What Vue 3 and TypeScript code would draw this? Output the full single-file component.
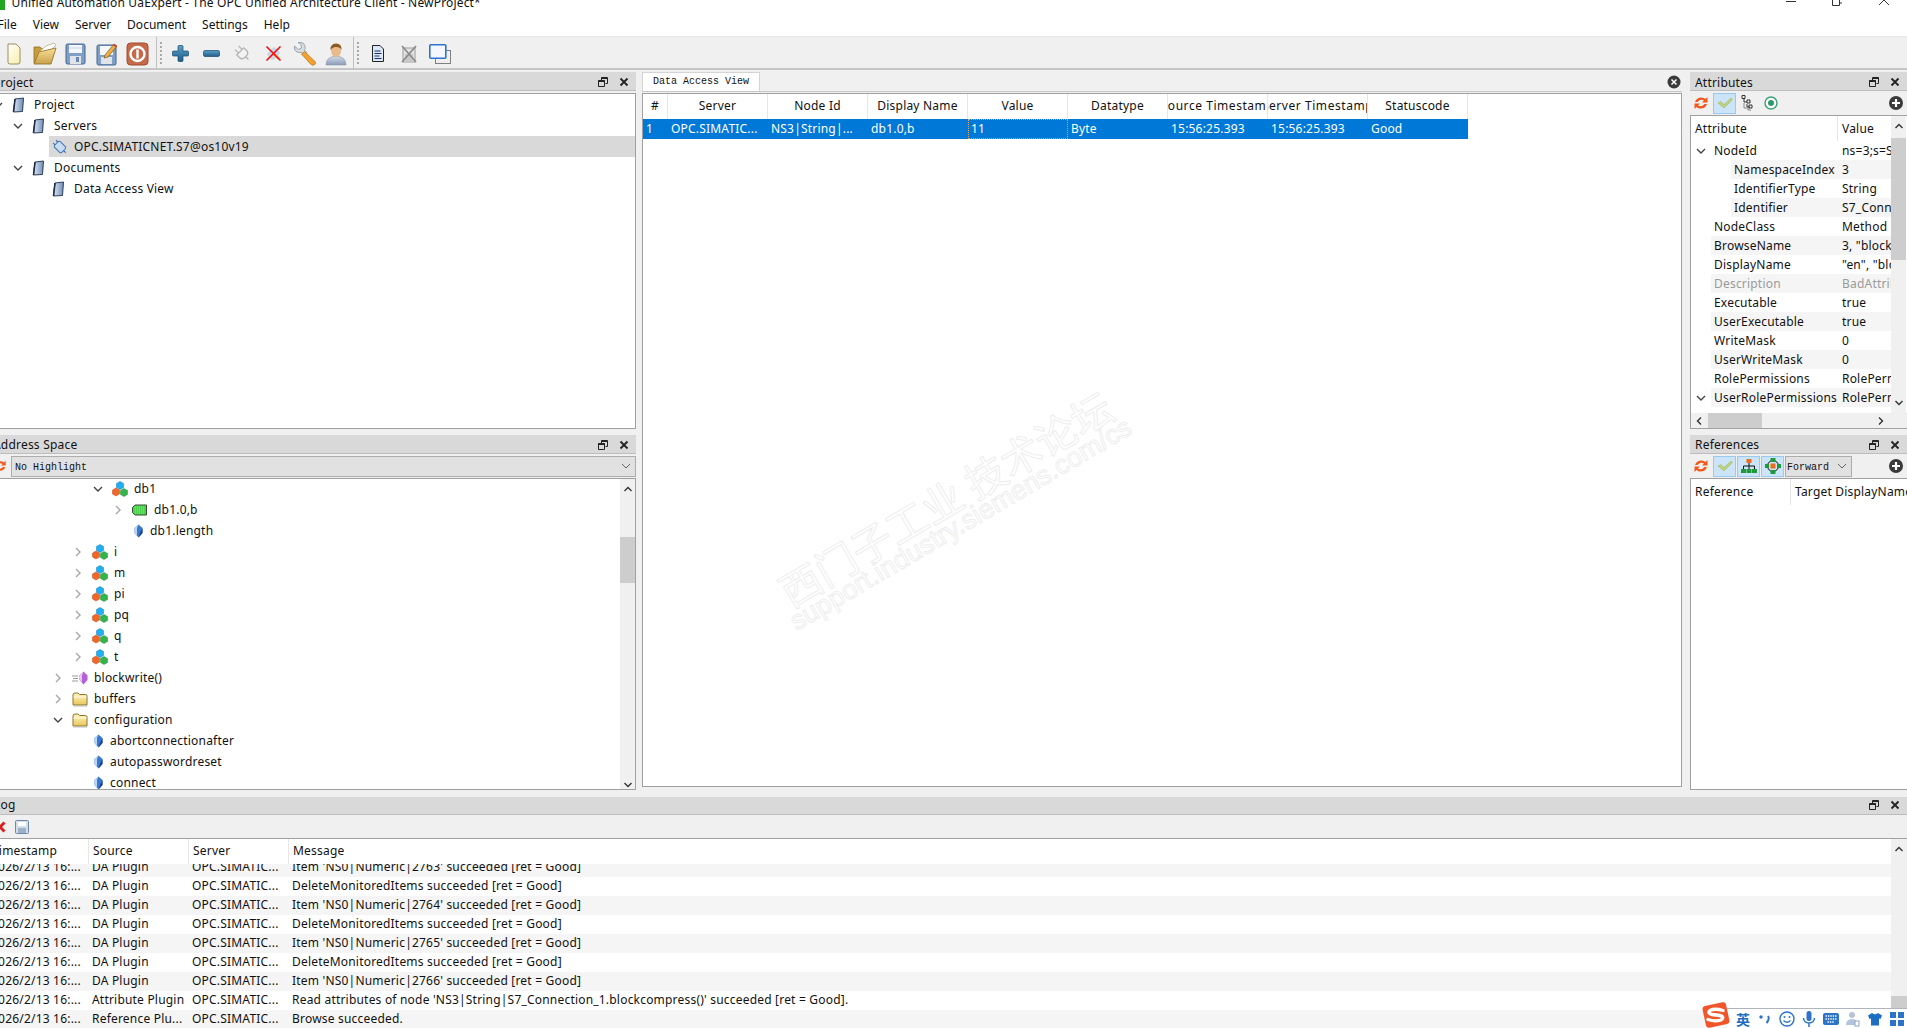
<script setup lang="ts">
interface TreeRow { level: number; chev?: 'down' | 'right'; icon: string; label: string; selected?: boolean }
const BASE_P = -10
const BASE_A = 50
const projectRows: TreeRow[] = [
  { level: 0, chev: 'down', icon: 'i-book', label: 'Project' },
  { level: 1, chev: 'down', icon: 'i-book', label: 'Servers' },
  { level: 2, icon: 'i-server', label: 'OPC.SIMATICNET.S7@os10v19', selected: true },
  { level: 1, chev: 'down', icon: 'i-book', label: 'Documents' },
  { level: 2, icon: 'i-book', label: 'Data Access View' },
]
const addressRows: TreeRow[] = [
  { level: 2, chev: 'down', icon: 'i-obj', label: 'db1' },
  { level: 3, chev: 'right', icon: 'i-tag', label: 'db1.0,b' },
  { level: 3, icon: 'i-var', label: 'db1.length' },
  { level: 1, chev: 'right', icon: 'i-obj', label: 'i' },
  { level: 1, chev: 'right', icon: 'i-obj', label: 'm' },
  { level: 1, chev: 'right', icon: 'i-obj', label: 'pi' },
  { level: 1, chev: 'right', icon: 'i-obj', label: 'pq' },
  { level: 1, chev: 'right', icon: 'i-obj', label: 'q' },
  { level: 1, chev: 'right', icon: 'i-obj', label: 't' },
  { level: 0, chev: 'right', icon: 'i-method', label: 'blockwrite()' },
  { level: 0, chev: 'right', icon: 'i-folder', label: 'buffers' },
  { level: 0, chev: 'down', icon: 'i-folder', label: 'configuration' },
  { level: 1, icon: 'i-var', label: 'abortconnectionafter' },
  { level: 1, icon: 'i-var', label: 'autopasswordreset' },
  { level: 1, icon: 'i-var', label: 'connect' },
]
const menus = ['File', 'View', 'Server', 'Document', 'Settings', 'Help']
const tb1 = [
  { id: 't-new', w: 14, h: 24 }, { id: 't-open', w: 24, h: 24 }, { id: 't-save', w: 21, h: 24 },
  { id: 't-saveas', w: 21, h: 24 }, { id: 't-power', w: 23, h: 24 },
]
const tb2 = [
  { id: 't-plus', w: 17, h: 17 }, { id: 't-minus', w: 17, h: 17 }, { id: 't-plug', w: 17, h: 17 },
  { id: 't-x', w: 17, h: 17 }, { id: 't-wrench', w: 24, h: 24 }, { id: 't-user', w: 22, h: 24 },
]
const tb3 = [{ id: 't-page', w: 12, h: 17 }, { id: 't-grayx', w: 16, h: 18 }, { id: 't-wins', w: 22, h: 20 }]
const daCols = ['#', 'Server', 'Node Id', 'Display Name', 'Value', 'Datatype', 'Source Timestamp', 'Server Timestamp', 'Statuscode']
const daRow = ['1', 'OPC.SIMATIC...', 'NS3|String|...', 'db1.0,b', '11', 'Byte', '15:56:25.393', '15:56:25.393', 'Good']
const attrs = [
  { k: 'NodeId', v: 'ns=3;s=S7', lvl: 0, chev: true },
  { k: 'NamespaceIndex', v: '3', lvl: 1 },
  { k: 'IdentifierType', v: 'String', lvl: 1 },
  { k: 'Identifier', v: 'S7_Connection', lvl: 1 },
  { k: 'NodeClass', v: 'Method', lvl: 0 },
  { k: 'BrowseName', v: '3, "blockcompress"', lvl: 0 },
  { k: 'DisplayName', v: '"en", "blockcompress"', lvl: 0 },
  { k: 'Description', v: 'BadAttributeIdInvalid', lvl: 0, muted: true },
  { k: 'Executable', v: 'true', lvl: 0 },
  { k: 'UserExecutable', v: 'true', lvl: 0 },
  { k: 'WriteMask', v: '0', lvl: 0 },
  { k: 'UserWriteMask', v: '0', lvl: 0 },
  { k: 'RolePermissions', v: 'RolePermissions', lvl: 0 },
  { k: 'UserRolePermissions', v: 'RolePermissions', lvl: 0, chev: true },
]
const good = 'succeeded [ret = Good]'
const logRows = [
  ['2026/2/13 16:...', 'DA Plugin', "Item 'NS0|Numeric|2763' " + good],
  ['2026/2/13 16:...', 'DA Plugin', 'DeleteMonitoredItems ' + good],
  ['2026/2/13 16:...', 'DA Plugin', "Item 'NS0|Numeric|2764' " + good],
  ['2026/2/13 16:...', 'DA Plugin', 'DeleteMonitoredItems ' + good],
  ['2026/2/13 16:...', 'DA Plugin', "Item 'NS0|Numeric|2765' " + good],
  ['2026/2/13 16:...', 'DA Plugin', 'DeleteMonitoredItems ' + good],
  ['2026/2/13 16:...', 'DA Plugin', "Item 'NS0|Numeric|2766' " + good],
  ['2026/2/13 16:...', 'Attribute Plugin', "Read attributes of node 'NS3|String|S7_Connection_1.blockcompress()' " + good + '.'],
  ['2026/2/13 16:...', 'Reference Plu...', 'Browse succeeded.'],
]
function indent(r: TreeRow, base: number) { return { marginLeft: base + r.level * 20 + 'px' } }
</script>

<template>
  <svg class="defs" width="0" height="0" aria-hidden="true">
    <defs>
      <linearGradient id="gBook" x1="0" y1="0" x2="1" y2="0"><stop offset="0" stop-color="#dfe7f2"/><stop offset="1" stop-color="#6f8db8"/></linearGradient>
      <linearGradient id="gFolder" x1="0" y1="0" x2="0" y2="1"><stop offset="0" stop-color="#fff6c4"/><stop offset="1" stop-color="#e9c75a"/></linearGradient>
      <linearGradient id="gPlus" x1="0" y1="0" x2="0" y2="1"><stop offset="0" stop-color="#5d9fc6"/><stop offset="1" stop-color="#1d5f8a"/></linearGradient>
      <linearGradient id="gUser" x1="0" y1="0" x2="0" y2="1"><stop offset="0" stop-color="#cfd8e6"/><stop offset="1" stop-color="#8c9cb8"/></linearGradient>
      <linearGradient id="gNew" x1="0" y1="0" x2="1" y2="1"><stop offset="0" stop-color="#ffffff"/><stop offset="1" stop-color="#fbeea8"/></linearGradient>
      <linearGradient id="gOpen" x1="0" y1="0" x2="0" y2="1"><stop offset="0" stop-color="#f8e09a"/><stop offset="1" stop-color="#c9a24a"/></linearGradient>
      <symbol id="i-book" viewBox="0 0 16 16"><path d="M3 2 L11.5 1 L10.5 14.5 L1.5 15 Z" fill="url(#gBook)" stroke="#2d3f5c" stroke-width="1"/><path d="M3 2 L1.5 15" stroke="#1f2c44" stroke-width="1.6" fill="none"/></symbol>
      <symbol id="i-server" viewBox="0 0 16 16"><g transform="rotate(-45 8 8)"><rect x="4" y="3" width="8" height="10" rx="1.5" fill="#c9dcf2" stroke="#3d74b5"/><path d="M6 0.5v2.5M10 0.5v2.5M8 13v3" stroke="#3d74b5" stroke-width="1.3"/></g></symbol>
      <symbol id="i-obj" viewBox="0 0 16 16"><path d="M8 0.5 L11.5 2.5 V6.5 L8 8.5 L4.5 6.5 V2.5 Z" fill="#1fb0f0" stroke="#1478c0" stroke-width=".5"/><path d="M4 7 L7.5 9 V13 L4 15 L0.5 13 V9 Z" fill="#f0672a" stroke="#c04a14" stroke-width=".5"/><path d="M12 7.5 L15.5 9.5 V13.5 L12 15.5 L8.5 13.5 V9.5 Z" fill="#33b54a" stroke="#1d8a33" stroke-width=".5"/></symbol>
      <symbol id="i-var" viewBox="0 0 9 14"><path d="M4.5 0.5 L8.5 4 L8.5 9 L4.5 13.5 L0.5 9 L0.5 4 Z" fill="#3a78d0"/><path d="M4.5 .5 L.5 4 V9 L3 11.5 V4 Z" fill="#bcd6f5"/><path d="M4.5 13.5 L8.5 9 V4 L6 9Z" fill="#1c3f8a"/></symbol>
      <symbol id="i-method" viewBox="0 0 16 14"><path d="M0 5h6M1 7.5h5M0 10h6" stroke="#9a9a9a" stroke-width="1" fill="none"/><path d="M11.5 0.5 L15.5 4.5 V9 L11.5 13.5 L7.5 9 V4.5 Z" fill="#b461d8"/><path d="M11.5 .5 L7.5 4.5 V9 L10 11 V4.5 Z" fill="#ecc4f8"/></symbol>
      <symbol id="i-folder" viewBox="0 0 16 16"><path d="M1 4 Q1 2 3 2 H6 L7.5 3.5 H13.5 Q15 3.5 15 5 V14 H1 Z" fill="url(#gFolder)" stroke="#8c7430"/><path d="M1.5 6 H14.5" stroke="#fffbe0" stroke-width="1"/><path d="M2 15 H15.5" stroke="#bbb" stroke-width="1"/></symbol>
      <symbol id="i-tag" viewBox="0 0 16 12"><path d="M3 1 H14.5 V11 H3 L0.5 8.5 V3.5 Z" fill="#4ed24e" stroke="#3c4a3c"/><path d="M3 3h10M3 5h10M3 7h10M3 9h10" stroke="#a8f0a8" stroke-width=".7" stroke-dasharray="1 1"/></symbol>
      <symbol id="s-float" viewBox="0 0 10 10"><path d="M3.5 .5h6v6h-2M.5 3.5h6v6h-6z M3.5 .5v3M.5 3.5h6" fill="none" stroke="#222" stroke-width="1"/><path d="M3.5 1.5h6M.5 4.5h6" stroke="#222"/></symbol>
      <symbol id="s-close" viewBox="0 0 10 10"><path d="M1.5 1.5l7 7M8.5 1.5l-7 7" stroke="#222" stroke-width="1.8"/></symbol>
      <symbol id="t-new" viewBox="0 0 14 24"><path d="M1 2 H9 L13 6 V20 Q13 22 11 22 H3 Q1 22 1 20 Z" fill="url(#gNew)" stroke="#9a8f60"/></symbol>
      <symbol id="t-open" viewBox="0 0 24 24"><path d="M1 5 H7 L9 7 H17 V21 H1 Z" fill="#c99c3c" stroke="#8f6d22" stroke-width=".8"/><path d="M5 11 L13 4 L21 1 L23 3 L16 10 Z" fill="#fff" stroke="#b9a36a" stroke-width=".7"/><path d="M1 22 L6 10 L23 6 L18 22 Z" fill="url(#gOpen)" stroke="#98762a" stroke-width=".9"/></symbol>
      <symbol id="t-save" viewBox="0 0 21 24"><rect x="1" y="2" width="19" height="20" rx="1.5" fill="#7f9fc6" stroke="#45658f"/><rect x="4" y="3" width="13" height="8" fill="#f3f6fb"/><path d="M4 6h13" stroke="#c8d4e4"/><rect x="5" y="14" width="11" height="8" fill="#dfe4ea"/><rect x="11" y="15" width="3" height="5" fill="#6a86ac"/></symbol>
      <symbol id="t-saveas" viewBox="0 0 21 24"><rect x="1" y="3" width="19" height="20" rx="1.5" fill="#7f9fc6" stroke="#45658f"/><rect x="4" y="4" width="13" height="9" fill="#f3f6fb"/><rect x="5" y="15" width="11" height="7" fill="#dfe4ea"/><path d="M9 13 L18 2 L21 4 L12 15 L8 16 Z" fill="#eeb040" stroke="#7a5416" stroke-width=".7"/><path d="M18 2 L21 4 L20 5.5 L17 3.4 Z" fill="#d24a3a"/></symbol>
      <symbol id="t-power" viewBox="0 0 23 24"><rect x="1" y="1" width="21" height="22" rx="3.5" fill="#c56a4b" stroke="#a24a2e"/><circle cx="11.5" cy="12" r="7" fill="none" stroke="#fff" stroke-width="2.4"/><path d="M11.5 7.5v9" stroke="#fff" stroke-width="2.4"/></symbol>
      <symbol id="t-plus" viewBox="0 0 17 17"><path d="M6 1.5 Q6 .5 7 .5 H10 Q11 .5 11 1.5 V6 H15.5 Q16.5 6 16.5 7 V10 Q16.5 11 15.5 11 H11 V15.5 Q11 16.5 10 16.5 H7 Q6 16.5 6 15.5 V11 H1.5 Q.5 11 .5 10 V7 Q.5 6 1.5 6 H6 Z" fill="url(#gPlus)" stroke="#174a70" stroke-width=".7"/></symbol>
      <symbol id="t-minus" viewBox="0 0 17 17"><rect x=".5" y="5.5" width="16" height="6" rx="1.5" fill="url(#gPlus)" stroke="#174a70" stroke-width=".7"/></symbol>
      <symbol id="t-plug" viewBox="0 0 17 17"><g transform="rotate(-45 8.5 8.5)" fill="#f2f2f2" stroke="#b4b4b4" stroke-width="1.3"><path d="M3.5 5.5 H13.5 V9.5 Q13.5 13 8.5 13 Q3.5 13 3.5 9.5 Z"/><path d="M6 5.5 V0.5 M11 5.5 V0.5 M8.5 13 V17" fill="none"/></g></symbol>
      <symbol id="t-x" viewBox="0 0 17 17"><rect x="4" y="3" width="9" height="11" rx="2" fill="#ccd4ea" transform="rotate(45 8.5 8.5)"/><path d="M9 9l5 5" stroke="#f0b040" stroke-width="2.5"/><path d="M1.5 1.5l14 14M15.5 1.5l-14 14" stroke="#ee1010" stroke-width="1.6"/></symbol>
      <symbol id="t-wrench" viewBox="0 0 24 24"><path d="M1.5 4 L5.5 7.5 L8.5 6 L8 2.5 L5 0.5 Q11 -0.5 12 4.5 Q12.5 6.5 11.5 8 L14 10.5 L11 13 L8 10.5 Q3 11 1.5 7 Z" fill="#d6dce2" stroke="#8b96a0" stroke-width=".8"/><path d="M11.5 9.5 L22 19.5 Q23.5 21.5 21 23 Q19 23.8 17.5 22 L8.5 12 Z" fill="#f2a02e" stroke="#b8731a" stroke-width=".7"/></symbol>
      <symbol id="t-user" viewBox="0 0 22 24"><path d="M1 23 Q1 16 8 14.5 H14 Q21 16 21 23 Z" fill="url(#gUser)" stroke="#8a96ac" stroke-width=".6"/><ellipse cx="11" cy="9" rx="5" ry="6" fill="#eab98c"/><path d="M5.5 8 Q5 2 11 1.5 Q17 1.5 16.5 8 Q15 4.5 10 5 Q7 5.5 5.5 8 Z" fill="#8a5a22"/></symbol>
      <symbol id="t-page" viewBox="0 0 12 17"><path d="M.5 .5 H8 L11.5 4 V16.5 H.5 Z" fill="#dbe6f7" stroke="#222"/><path d="M2.5 6h6M2.5 8.5h7M2.5 11h5M2.5 13.5h7" stroke="#1b2f6a" stroke-width="1.2"/></symbol>
      <symbol id="t-grayx" viewBox="0 0 16 18"><rect x="2" y="3" width="12" height="14" fill="#e4e4e4" stroke="#9a9a9a"/><rect x="4" y="9" width="8" height="8" fill="#c8c8c8"/><path d="M1 1 L15 17 M15 1 L1 17" stroke="#8c8c8c" stroke-width="1.8"/></symbol>
      <symbol id="t-wins" viewBox="0 0 22 20"><rect x="6.5" y="6.5" width="15" height="13" fill="#efefef" stroke="#7f7f7f"/><rect x=".8" y=".8" width="16" height="13.5" rx="1" fill="#f4f8fe" stroke="#2f72d0" stroke-width="1.6"/></symbol>
      <symbol id="t-refresh" viewBox="0 0 16 14"><path d="M2 6 Q3.5 1.5 8.5 1.5 Q11 1.5 12.5 3 L14.5 1 V6.5 H9 L11 4.6 Q7.5 2.5 4.5 6 Z M14 8 Q12.5 12.5 7.5 12.5 Q5 12.5 3.5 11 L1.5 13 V7.5 H7 L5 9.4 Q8.5 11.5 11.5 8 Z" fill="#f0581c"/></symbol>
      <symbol id="t-check" viewBox="0 0 16 14"><path d="M1 7 L4 5.5 L7 8.5 L14 2 L15.5 3.5 L7 12 Z" fill="#bdd27e" stroke="#9db35c" stroke-width=".5"/></symbol>
      <symbol id="t-browse" viewBox="0 0 12 16"><path d="M1 .5h3v3H1zM3 4v3h3M6 5h3v3H6zM6 9v3h3M8 10h3v3H8z" fill="none" stroke="#333" stroke-width="1"/><path d="M3 8v5h4v2h3" fill="none" stroke="#888"/></symbol>
      <symbol id="t-target" viewBox="0 0 14 14"><circle cx="7" cy="7" r="6" fill="#fff" stroke="#3ca078" stroke-width="1.4"/><circle cx="7" cy="7" r="3" fill="#2f9a68"/></symbol>
      <symbol id="t-add" viewBox="0 0 14 14"><circle cx="7" cy="7" r="7" fill="#3a3a3a"/><path d="M7 3v8M3 7h8" stroke="#fff" stroke-width="2.2"/></symbol>
      <symbol id="t-hier" viewBox="0 0 16 14"><rect x="5.5" y="0" width="5" height="4" fill="#f06a1e"/><path d="M8 4v3M2.5 10V7h11v3M8 7v3" stroke="#111" fill="none"/><rect x="0" y="10" width="5" height="4" fill="#1e9a3a"/><rect x="5.5" y="10" width="5" height="4" fill="#1e9a3a"/><rect x="11" y="10" width="5" height="4" fill="#1e9a3a"/></symbol>
      <symbol id="t-net" viewBox="0 0 16 16"><circle cx="8" cy="8" r="5.5" fill="none" stroke="#111"/><rect x="5.5" y="0" width="5" height="4" fill="#1e9a3a"/><rect x="5.5" y="12" width="5" height="4" fill="#1e9a3a"/><rect x="0" y="6" width="4" height="4" fill="#1e9a3a"/><rect x="12" y="6" width="4" height="4" fill="#1e9a3a"/><rect x="5.5" y="5.5" width="5" height="5" fill="#f06a1e"/></symbol>
    </defs>
  </svg>

  <div class="window">
    <header class="titlebar">
      <span class="app-logo"></span>
      <span class="app-title">Unified Automation UaExpert - The OPC Unified Architecture Client - NewProject*</span>
      <div class="win-ctl">
        <svg width="10" height="10" viewBox="0 0 10 10"><path d="M0 1.5h10" stroke="#333"/></svg>
        <svg width="10" height="10" viewBox="0 0 10 10"><path d="M2.5 -1.5V-5h8v8H7.5M.5 -1.5h7v7h-7z" fill="none" stroke="#333"/></svg>
        <svg width="12" height="10" viewBox="0 0 12 10"><path d="M1-5l10 10M11-5L1 5" stroke="#333" fill="none"/></svg>
      </div>
    </header>

    <nav class="menubar"><span v-for="m in menus" :key="m" class="menu">{{ m }}</span></nav>

    <div class="toolbar">
      <div class="tb-group first"><span v-for="b in tb1" :key="b.id" class="tb-btn"><svg :width="b.w" :height="b.h"><use :href="'#' + b.id"/></svg></span></div>
      <span class="tb-sep"></span><span class="tb-grip"></span>
      <div class="tb-group"><span v-for="b in tb2" :key="b.id" class="tb-btn"><svg :width="b.w" :height="b.h"><use :href="'#' + b.id"/></svg></span></div>
      <span class="tb-sep"></span><span class="tb-grip"></span>
      <div class="tb-group"><span v-for="b in tb3" :key="b.id" class="tb-btn"><svg :width="b.w" :height="b.h"><use :href="'#' + b.id"/></svg></span></div>
    </div>

    <div class="workspace">
      <div class="col col-left">
        <section class="dock dock-project">
          <div class="dock-title t-high"><span class="clip-title c-project">Project</span><span class="dock-btns"><svg width="10" height="10"><use href="#s-float"/></svg><svg width="10" height="10"><use href="#s-close"/></svg></span></div>
          <div class="panel tree">
            <div v-for="r in projectRows" :key="r.label" class="tree-row" :class="{ sel: r.selected }">
              <span class="row-in" :style="indent(r, BASE_P)">
                <span class="chev"><svg v-if="r.chev" width="10" height="10" viewBox="0 0 10 10"><path d="M1 3l4 4 4-4" fill="none" stroke="#444" stroke-width="1.4"/></svg></span>
                <svg class="ico" :width="16" :height="16"><use :href="'#' + r.icon"/></svg>
                <span>{{ r.label }}</span>
              </span>
            </div>
          </div>
        </section>

        <section class="dock dock-address">
          <div class="dock-title t-low"><span class="clip-title c-address">Address Space</span><span class="dock-btns"><svg width="10" height="10"><use href="#s-float"/></svg><svg width="10" height="10"><use href="#s-close"/></svg></span></div>
          <div class="hl-row">
            <svg class="hl-ico" width="14" height="14"><use href="#t-refresh"/></svg>
            <div class="combo hl-combo"><span class="mono">No Highlight</span><svg width="10" height="10" viewBox="0 0 10 10"><path d="M1 3l4 4 4-4" fill="none" stroke="#666"/></svg></div>
          </div>
          <div class="panel tree addr">
            <div class="addr-rows">
              <div v-for="r in addressRows" :key="r.label" class="tree-row">
                <span class="row-in" :style="indent(r, BASE_A)">
                  <span class="chev">
                    <svg v-if="r.chev === 'down'" width="10" height="10" viewBox="0 0 10 10"><path d="M1 3l4 4 4-4" fill="none" stroke="#444" stroke-width="1.4"/></svg>
                    <svg v-else-if="r.chev === 'right'" width="10" height="10" viewBox="0 0 10 10"><path d="M3 1l4 4-4 4" fill="none" stroke="#a6a6a6" stroke-width="1.4"/></svg>
                  </span>
                  <svg v-if="r.icon === 'i-var'" class="ico-var" width="9" height="14"><use href="#i-var"/></svg>
                  <svg v-else class="ico" width="16" height="16"><use :href="'#' + r.icon"/></svg>
                  <span>{{ r.label }}</span>
                </span>
              </div>
            </div>
            <div class="vscroll">
              <svg width="10" height="8" viewBox="0 0 10 8"><path d="M1.5 6l3.5-3.5L8.5 6" fill="none" stroke="#333" stroke-width="1.4"/></svg>
              <div class="track addr-track"><div class="thumb addr-thumb"></div></div>
              <svg width="10" height="8" viewBox="0 0 10 8"><path d="M1.5 2l3.5 3.5L8.5 2" fill="none" stroke="#333" stroke-width="1.4"/></svg>
            </div>
          </div>
        </section>
      </div>

      <div class="col col-center">
        <div class="tabbar">
          <span class="tab mono">Data Access View</span>
          <svg class="tab-close" width="14" height="14" viewBox="0 0 14 14"><circle cx="7" cy="7" r="6.5" fill="#3a3a3a"/><path d="M4.5 4.5l5 5M9.5 4.5l-5 5" stroke="#fff" stroke-width="1.5"/></svg>
        </div>
        <div class="panel da">
          <div class="da-head">
            <span v-for="c in daCols" :key="c" class="da-h"><span>{{ c }}</span></span>
          </div>
          <div class="da-row">
            <span v-for="(c, i) in daRow" :key="i" class="da-c" :class="{ focus: i === 4 }">{{ c }}</span>
          </div>
          <div class="watermark" aria-hidden="true">
            <span class="wm-cn">西门子工业 技术论坛</span>
            <span class="wm-en">support.industry.siemens.com/cs</span>
          </div>
        </div>
      </div>

      <div class="col col-right">
        <section class="dock dock-attr">
          <div class="dock-title t-high"><span class="r-title">Attributes</span><span class="dock-btns"><svg width="10" height="10"><use href="#s-float"/></svg><svg width="10" height="10"><use href="#s-close"/></svg></span></div>
          <div class="side-tools">
            <svg class="r-ico" width="16" height="14"><use href="#t-refresh"/></svg>
            <span class="toggle"><svg width="16" height="14"><use href="#t-check"/></svg></span>
            <svg class="browse-ico" width="12" height="16"><use href="#t-browse"/></svg>
            <svg class="target-ico" width="14" height="14"><use href="#t-target"/></svg>
            <svg class="add-ico" width="14" height="14"><use href="#t-add"/></svg>
          </div>
          <div class="panel attr">
            <div class="attr-main">
              <div class="attr-body">
                <div class="attr-head"><span class="ah-k">Attribute</span><span class="ah-v">Value</span></div>
                <div v-for="(a, i) in attrs" :key="a.k" class="attr-row" :class="{ muted: a.muted }">
                  <span class="attr-chev"><svg v-if="a.chev" width="10" height="10" viewBox="0 0 10 10"><path d="M1 3l4 4 4-4" fill="none" stroke="#444" stroke-width="1.4"/></svg></span>
                  <span class="attr-band" :class="{ alt: i % 2 === 1, child: a.lvl === 1 }">
                    <span class="attr-k">{{ a.k }}</span><span class="attr-v">{{ a.v }}</span>
                  </span>
                </div>
              </div>
              <div class="vscroll v-attr">
                <svg width="10" height="8" viewBox="0 0 10 8"><path d="M1.5 6l3.5-3.5L8.5 6" fill="none" stroke="#333" stroke-width="1.4"/></svg>
                <div class="track attr-track"><div class="thumb attr-thumb"></div></div>
                <svg width="10" height="8" viewBox="0 0 10 8"><path d="M1.5 2l3.5 3.5L8.5 2" fill="none" stroke="#333" stroke-width="1.4"/></svg>
              </div>
            </div>
            <div class="hscroll">
              <svg width="8" height="10" viewBox="0 0 8 10"><path d="M6 1.5L2.5 5 6 8.5" fill="none" stroke="#333" stroke-width="1.4"/></svg>
              <div class="htrack"><div class="hthumb"></div></div>
              <svg width="8" height="10" viewBox="0 0 8 10"><path d="M2 1.5L5.5 5 2 8.5" fill="none" stroke="#333" stroke-width="1.4"/></svg>
            </div>
          </div>
        </section>
        <section class="dock dock-ref">
          <div class="dock-title t-low"><span class="r-title">References</span><span class="dock-btns"><svg width="10" height="10"><use href="#s-float"/></svg><svg width="10" height="10"><use href="#s-close"/></svg></span></div>
          <div class="side-tools ref-tools">
            <svg class="r-ico" width="16" height="14"><use href="#t-refresh"/></svg>
            <span class="toggle"><svg width="16" height="14"><use href="#t-check"/></svg></span>
            <span class="toggle t2"><svg width="16" height="14"><use href="#t-hier"/></svg></span>
            <span class="toggle t2"><svg width="16" height="16"><use href="#t-net"/></svg></span>
            <div class="combo fw-combo"><span class="mono">Forward</span><svg width="10" height="10" viewBox="0 0 10 10"><path d="M1 3l4 4 4-4" fill="none" stroke="#666"/></svg></div>
            <svg class="add-ico" width="14" height="14"><use href="#t-add"/></svg>
          </div>
          <div class="panel ref">
            <div class="ref-head"><span class="rh-k">Reference</span><span class="rh-v">Target DisplayName</span></div>
          </div>
        </section>
      </div>
    </div>

    <section class="log">
      <div class="dock-title log-title"><span class="clip-title c-log">Log</span><span class="dock-btns"><svg width="10" height="10"><use href="#s-float"/></svg><svg width="10" height="10"><use href="#s-close"/></svg></span></div>
      <div class="log-tools">
        <svg class="log-x" width="12" height="12" viewBox="0 0 12 12"><path d="M1.5 1.5l9 9M10.5 1.5l-9 9" stroke="#d8201c" stroke-width="3"/></svg>
        <svg class="log-save" width="14" height="14" viewBox="0 0 14 14"><rect x=".5" y=".5" width="13" height="13" rx="1" fill="#d4deeb" stroke="#6f88a8"/><rect x="3" y="2" width="8" height="4" fill="#fff"/><rect x="3" y="8" width="8" height="5" fill="#9eb0c8"/></svg>
      </div>
      <div class="log-main">
        <div class="log-table">
          <div class="log-head"><span class="l1">Timestamp</span><span class="l2">Source</span><span class="l3">Server</span><span class="l4">Message</span></div>
          <div class="log-rows">
            <div v-for="(r, i) in logRows" :key="i" class="log-row" :class="{ alt: i % 2 === 0 }">
              <span class="l1">{{ r[0] }}</span><span class="l2">{{ r[1] }}</span><span class="l3">OPC.SIMATIC...</span><span class="l4">{{ r[2] }}</span>
            </div>
          </div>
        </div>
        <div class="vscroll v-log">
          <svg width="10" height="8" viewBox="0 0 10 8"><path d="M1.5 6l3.5-3.5L8.5 6" fill="none" stroke="#333" stroke-width="1.4"/></svg>
          <div class="track log-track"><div class="thumb log-thumb"></div></div>
        </div>
      </div>
    </section>

    <div class="ime">
      <svg class="ime-logo" width="30" height="26" viewBox="0 0 30 26"><rect x="3" y="2" width="24" height="22" rx="3" transform="rotate(-12 15 13)" fill="#f0562a"/><path d="M22 8.5 Q14 6 9 8.5 Q6 11 11 12.5 L19 13.5 Q24 15 20 18 Q14 20 7 17.5" fill="none" stroke="#fff" stroke-width="3.4" stroke-linecap="round"/></svg>
      <div class="ime-bar">
        <span class="ime-cell ime-cn">英</span>
        <span class="ime-cell"><svg width="14" height="14" viewBox="0 0 14 14"><circle cx="3" cy="5" r="1.7" fill="#2b74c8"/><path d="M10 4 Q12 7 8.5 11" fill="none" stroke="#2b74c8" stroke-width="2"/></svg></span>
        <span class="ime-cell"><svg width="16" height="16" viewBox="0 0 16 16"><circle cx="8" cy="8" r="7" fill="none" stroke="#2b74c8" stroke-width="1.4"/><circle cx="5.5" cy="6" r="1" fill="#2b74c8"/><circle cx="10.5" cy="6" r="1" fill="#2b74c8"/><path d="M4.5 9.5 Q8 13 11.5 9.5" fill="none" stroke="#2b74c8" stroke-width="1.2"/></svg></span>
        <span class="ime-cell"><svg width="14" height="16" viewBox="0 0 14 16"><rect x="4.5" y="0" width="5" height="10" rx="2.5" fill="#2b74c8"/><path d="M1.5 7 Q2 12 7 12 Q12 12 12.5 7M7 12v4" fill="none" stroke="#2b74c8" stroke-width="1.5"/></svg></span>
        <span class="ime-cell"><svg width="16" height="12" viewBox="0 0 16 12"><rect width="16" height="12" rx="2" fill="#2b74c8"/><path d="M2.5 3h11M2.5 6h11M4.5 9h7" stroke="#fff" stroke-width="1.4" stroke-dasharray="1.4 1"/></svg></span>
        <span class="ime-cell"><svg width="14" height="16" viewBox="0 0 14 16"><circle cx="6" cy="4" r="3" fill="#b4c4dc"/><path d="M0 14 Q0 8 6 8 Q10 8 11 11 V14Z" fill="#b4c4dc"/><rect x="9" y="10" width="4" height="5" fill="#fff" stroke="#8ea4c4"/></svg></span>
        <span class="ime-cell"><svg width="14" height="14" viewBox="0 0 14 14"><path d="M4 1 L0 3.5 L1.5 7 L3 6.5 V13.5 H11 V6.5 L12.5 7 L14 3.5 L10 1 Q7 3.5 4 1Z" fill="#1b6ec2"/></svg></span>
        <span class="ime-cell"><svg width="14" height="14" viewBox="0 0 14 14"><rect width="6" height="6" fill="#2b74c8"/><rect x="8" width="6" height="6" fill="#2b74c8"/><rect y="8" width="6" height="6" fill="#2b74c8"/><rect x="8" y="8" width="6" height="6" fill="#2b74c8"/></svg></span>
      </div>
    </div>
  </div>
</template>

<style>
html, body { margin: 0; padding: 0; overflow: hidden; background: #f0f0f0; }
</style>

<style scoped>
.defs { position: absolute; }
.window { width: 1907px; height: 1028px; position: relative; overflow: hidden; background: #f0f0f0; display: flex; flex-direction: column; font: 12px/1 "Noto Sans", "Noto Sans CJK SC", sans-serif; letter-spacing: .2px; color: #111; }
.titlebar { height: 12px; flex: none; background: #fff; display: flex; align-items: flex-end; position: relative; overflow: hidden; }
.app-logo { width: 5px; height: 10px; background: #1fa71f; align-self: flex-start; }
.app-title { margin-left: 6.5px; align-self: flex-start; margin-top: -5px; line-height: 16px; white-space: nowrap; letter-spacing: .17px; }
.win-ctl { margin-left: auto; display: flex; align-self: flex-start; gap: 36px; padding-right: 17px; }
.menubar { height: 25px; flex: none; background: #fff; display: flex; align-items: center; border-bottom: 1px solid #e6e6e6; box-sizing: border-box; padding-top: 2px; }
.menu { padding: 0 8px; letter-spacing: 0; }
.menu:first-child { margin-left: -10.5px; }
.toolbar { height: 33px; flex: none; display: flex; align-items: center; border-bottom: 2px solid #c6c6c6; box-sizing: border-box; background: #f0f0f0; padding-top: 2px; }
.tb-group { display: flex; }
.tb-group.first { margin-left: -2px; margin-right: 1px; }
.tb-btn { width: 31px; height: 28px; display: flex; align-items: center; justify-content: center; }
.tb-sep { width: 1px; height: 31px; background: #c0c0c0; margin: -2px 0 0 2px; }
.tb-grip { width: 2px; height: 24px; margin: 0 3px; background-image: linear-gradient(#a8a8a8 50%, transparent 50%); background-size: 2px 4px; }
.workspace { height: 726px; flex: none; display: flex; padding-top: 2px; box-sizing: border-box; }
.col { display: flex; flex-direction: column; }
.col-left { width: 636px; flex: none; }
.col-center { width: 1040px; flex: none; margin-left: 6px; }
.col-right { width: 217px; flex: none; margin-left: 8px; }
.dock { display: flex; flex-direction: column; }
.dock-project { height: 358px; }
.dock-project .panel { height: 336px; }
.dock-title { height: 16px; padding-top: 2px; flex: none; background: #d9d9d9; display: flex; align-items: center; border-bottom: 1px solid #bdbdbd; white-space: nowrap; overflow: hidden; }
.dock-title.t-low { height: 17px; padding-top: 1px; }
.dock-title.t-high > span:first-child { padding-top: 2px; }
.clip-title { display: block; }
.c-project { margin-left: -7px; }
.c-address { margin-left: -7px; }
.c-log { margin-left: -6px; }
.dock-btns { margin-left: auto; display: flex; gap: 11px; padding-right: 7px; }
.panel { background: #fff; border: 1px solid #a0a0a0; border-left: 0; box-sizing: border-box; margin-top: 2px; }
.tree { overflow: hidden; }
.tree-row { height: 21px; display: flex; align-items: center; white-space: nowrap; }
.tree-row.sel { background: #d9d9d9; margin-left: 49px; }
.tree-row.sel .row-in { transform: translateX(-49px); }
.row-in { display: flex; align-items: center; }
.chev { width: 16px; height: 16px; flex: none; display: flex; align-items: center; justify-content: center; }
.ico { margin: 0 6px; flex: none; }
.ico-var { margin: 0 7px 0 8px; flex: none; }
.dock-address { margin-top: 5px; }
.hl-row { height: 24px; display: flex; align-items: center; }
.hl-ico { margin-left: -7px; margin-right: 4px; flex: none; }
.combo { display: flex; align-items: center; background: #e1e1e1; border: 1px solid #adadad; box-sizing: border-box; }
.hl-combo { flex: 1; height: 21px; padding: 0 4px 0 3px; justify-content: space-between; }
.combo .mono { padding-top: 3px; }
.mono { font: 10px/1 "Liberation Mono", monospace; letter-spacing: 0; white-space: nowrap; }
.addr { height: 312px; margin-top: 0; display: flex; overflow: hidden; }
.addr-rows { flex: 1; overflow: hidden; margin-top: -1px; }
.vscroll { width: 15px; flex: none; display: flex; flex-direction: column; align-items: center; background: #f0f0f0; padding-top: 6px; box-sizing: border-box; }
.track { flex: 1; width: 100%; position: relative; margin: 4px 0; }
.thumb { position: absolute; left: 0; right: 0; background: #cdcdcd; }
.addr-track { margin-bottom: 3px; }
.addr-thumb { top: 40px; height: 46px; }
.tabbar { height: 19px; flex: none; display: flex; align-items: flex-end; justify-content: space-between; border-bottom: 1px solid #c8c8c8; }
.tab { background: #fff; width: 118px; height: 19px; box-sizing: border-box; border: 1px solid #d4d4d4; border-bottom: 0; display: flex; align-items: center; justify-content: center; }
.tab-close { align-self: center; margin-right: 1px; }
.da { height: 694px; margin-top: 1px; border-left: 1px solid #a0a0a0; position: relative; overflow: hidden; }
.da-head { display: flex; height: 25px; }
.da-h { width: 100px; flex: none; box-sizing: border-box; border-right: 1px solid #e6e6e6; display: flex; align-items: center; justify-content: center; overflow: hidden; white-space: nowrap; padding-bottom: 1px; }
.da-h > span { flex: none; }
.da-h:nth-child(7), .da-h:nth-child(8) { letter-spacing: .55px; }
.da-h:first-child, .da-c:first-child { width: 25px; }
.da-row { display: flex; height: 20px; width: 825px; background: #0078d7; color: #fff; }
.da-c { width: 100px; flex: none; box-sizing: border-box; padding: 0 3px; display: flex; align-items: center; white-space: nowrap; }
.da-c.focus { outline: 1px dotted #f7a14a; outline-offset: -1px; }
.watermark { position: absolute; left: 97px; top: 378px; width: 420px; display: flex; flex-direction: column; align-items: center; transform: rotate(-30.5deg); color: #fff; -webkit-text-stroke: 1px #eeeeee; white-space: nowrap; pointer-events: none; letter-spacing: 0; }
.wm-cn { font: 41px/48px "Noto Sans CJK SC", sans-serif; }
.wm-en { font: 27px/26px "Liberation Sans", sans-serif; margin-top: -6px; }
.dock-title .r-title { margin-left: 5px; }
.dock-attr { height: 358px; }
.side-tools { height: 24px; flex: none; display: flex; align-items: center; }
.r-ico { margin: 0 4px 0 3px; flex: none; }
.toggle { width: 23px; height: 21px; flex: none; background: #cce4f7; border: 1px solid #99c9ef; box-sizing: border-box; display: flex; align-items: center; justify-content: center; }
.t2 { margin-left: 1px; }
.browse-ico { margin-left: 5px; }
.target-ico { margin-left: 11px; }
.add-ico { margin-left: auto; margin-right: 4px; }
.attr { height: 314px; margin-top: 0; border-left: 1px solid #a0a0a0; border-right: 0; display: flex; flex-direction: column; overflow: hidden; }
.attr-main { flex: 1; display: flex; min-height: 0; }
.attr-body { width: 200px; flex: none; overflow: hidden; }
.attr-head { height: 25px; display: flex; align-items: center; }
.ah-k { width: 147px; box-sizing: border-box; padding-left: 4px; height: 100%; display: flex; align-items: center; border-right: 1px solid #e6e6e6; }
.ah-v { padding-left: 4px; }
.attr-row { height: 19px; display: flex; align-items: stretch; white-space: nowrap; }
.attr-chev { width: 20px; flex: none; display: flex; align-items: center; justify-content: center; }
.attr-band { flex: 1; display: flex; align-items: center; padding-left: 3px; overflow: hidden; }
.attr-band.alt { background: #f5f5f5; }
.attr-band.child { margin-left: 20px; }
.attr-k { width: 124px; flex: none; overflow: hidden; line-height: 16px; }
.attr-band.child .attr-k { width: 104px; }
.attr-v { flex: none; margin-left: 4px; }
.muted { color: #9a9a9a; }
.v-attr { width: 15px; padding-bottom: 6px; }
.attr-track { margin-bottom: 4px; }
.attr-thumb { top: 4px; height: 122px; }
.hscroll { height: 15px; flex: none; background: #f0f0f0; display: flex; align-items: center; padding: 0 22px 0 4px; }
.htrack { flex: 1; position: relative; height: 100%; margin: 0 4px; }
.hthumb { position: absolute; left: 1px; top: 0; bottom: 0; width: 54px; background: #cdcdcd; }
.dock-ref { margin-top: 5px; }
.ref-tools { height: 24px; }
.fw-combo { width: 67px; height: 21px; margin-left: 1px; padding: 0 4px 0 1px; justify-content: space-between; }
.ref { height: 312px; margin-top: 0; border-left: 1px solid #a0a0a0; border-right: 0; }
.ref-head { height: 26px; display: flex; align-items: center; white-space: nowrap; overflow: hidden; }
.rh-k { width: 100px; height: 100%; box-sizing: border-box; padding-left: 4px; display: flex; align-items: center; border-right: 1px solid #e6e6e6; flex: none; }
.rh-v { padding-left: 4px; width: 112px; flex: none; overflow: hidden; line-height: 16px; }
.log { flex: 1; min-height: 0; display: flex; flex-direction: column; margin-top: 1px; }
.log-title { height: 16px; padding: 0 0 1px; }
.log-tools { height: 24px; flex: none; display: flex; align-items: center; border-bottom: 1px solid #a0a0a0; box-sizing: border-box; }
.log-x { margin-left: -6px; flex: none; }
.log-save { margin-left: 9px; flex: none; }
.log-main { flex: 1; min-height: 0; display: flex; overflow: hidden; }
.log-table { flex: 1; min-width: 0; overflow: hidden; background: #fff; }
.log-head { height: 25px; display: flex; align-items: center; background: #fff; position: relative; z-index: 1; }
.log-rows { margin-top: -6px; }
.log-row { height: 19px; display: flex; align-items: center; white-space: nowrap; box-sizing: border-box; padding-bottom: 1px; }
.log-row.alt { background: #f5f5f5; }
.l1 { width: 101px; margin-left: -12px; }
.l2 { width: 100px; }
.l3 { width: 100px; }
.l1, .l2, .l3, .l4 { box-sizing: border-box; padding-left: 3px; flex: none; overflow: hidden; white-space: nowrap; line-height: 16px; }
.log-head > span { padding: 0 0 1px 4px; height: 100%; display: flex; align-items: center; border-right: 1px solid #e6e6e6; }
.log-head > .l4 { border-right: 0; }
.v-log { width: 16px; }
.log-track { margin: 0; }
.log-thumb { top: 143px; height: 13px; }
.ime { position: absolute; right: 0; bottom: 0; display: flex; align-items: flex-end; }
.ime-logo { margin-right: -4px; position: relative; z-index: 1; flex: none; }
.ime-bar { height: 20px; background: #fff; border-top: 1px solid #b0b4bc; box-sizing: border-box; display: flex; align-items: center; padding-left: 5px; width: 180px; }
.ime-cell { width: 22px; flex: none; display: flex; align-items: center; justify-content: center; }
.ime-cn { color: #1b6ec2; font: 700 14px/1 "Noto Sans CJK SC", sans-serif; }
</style>
